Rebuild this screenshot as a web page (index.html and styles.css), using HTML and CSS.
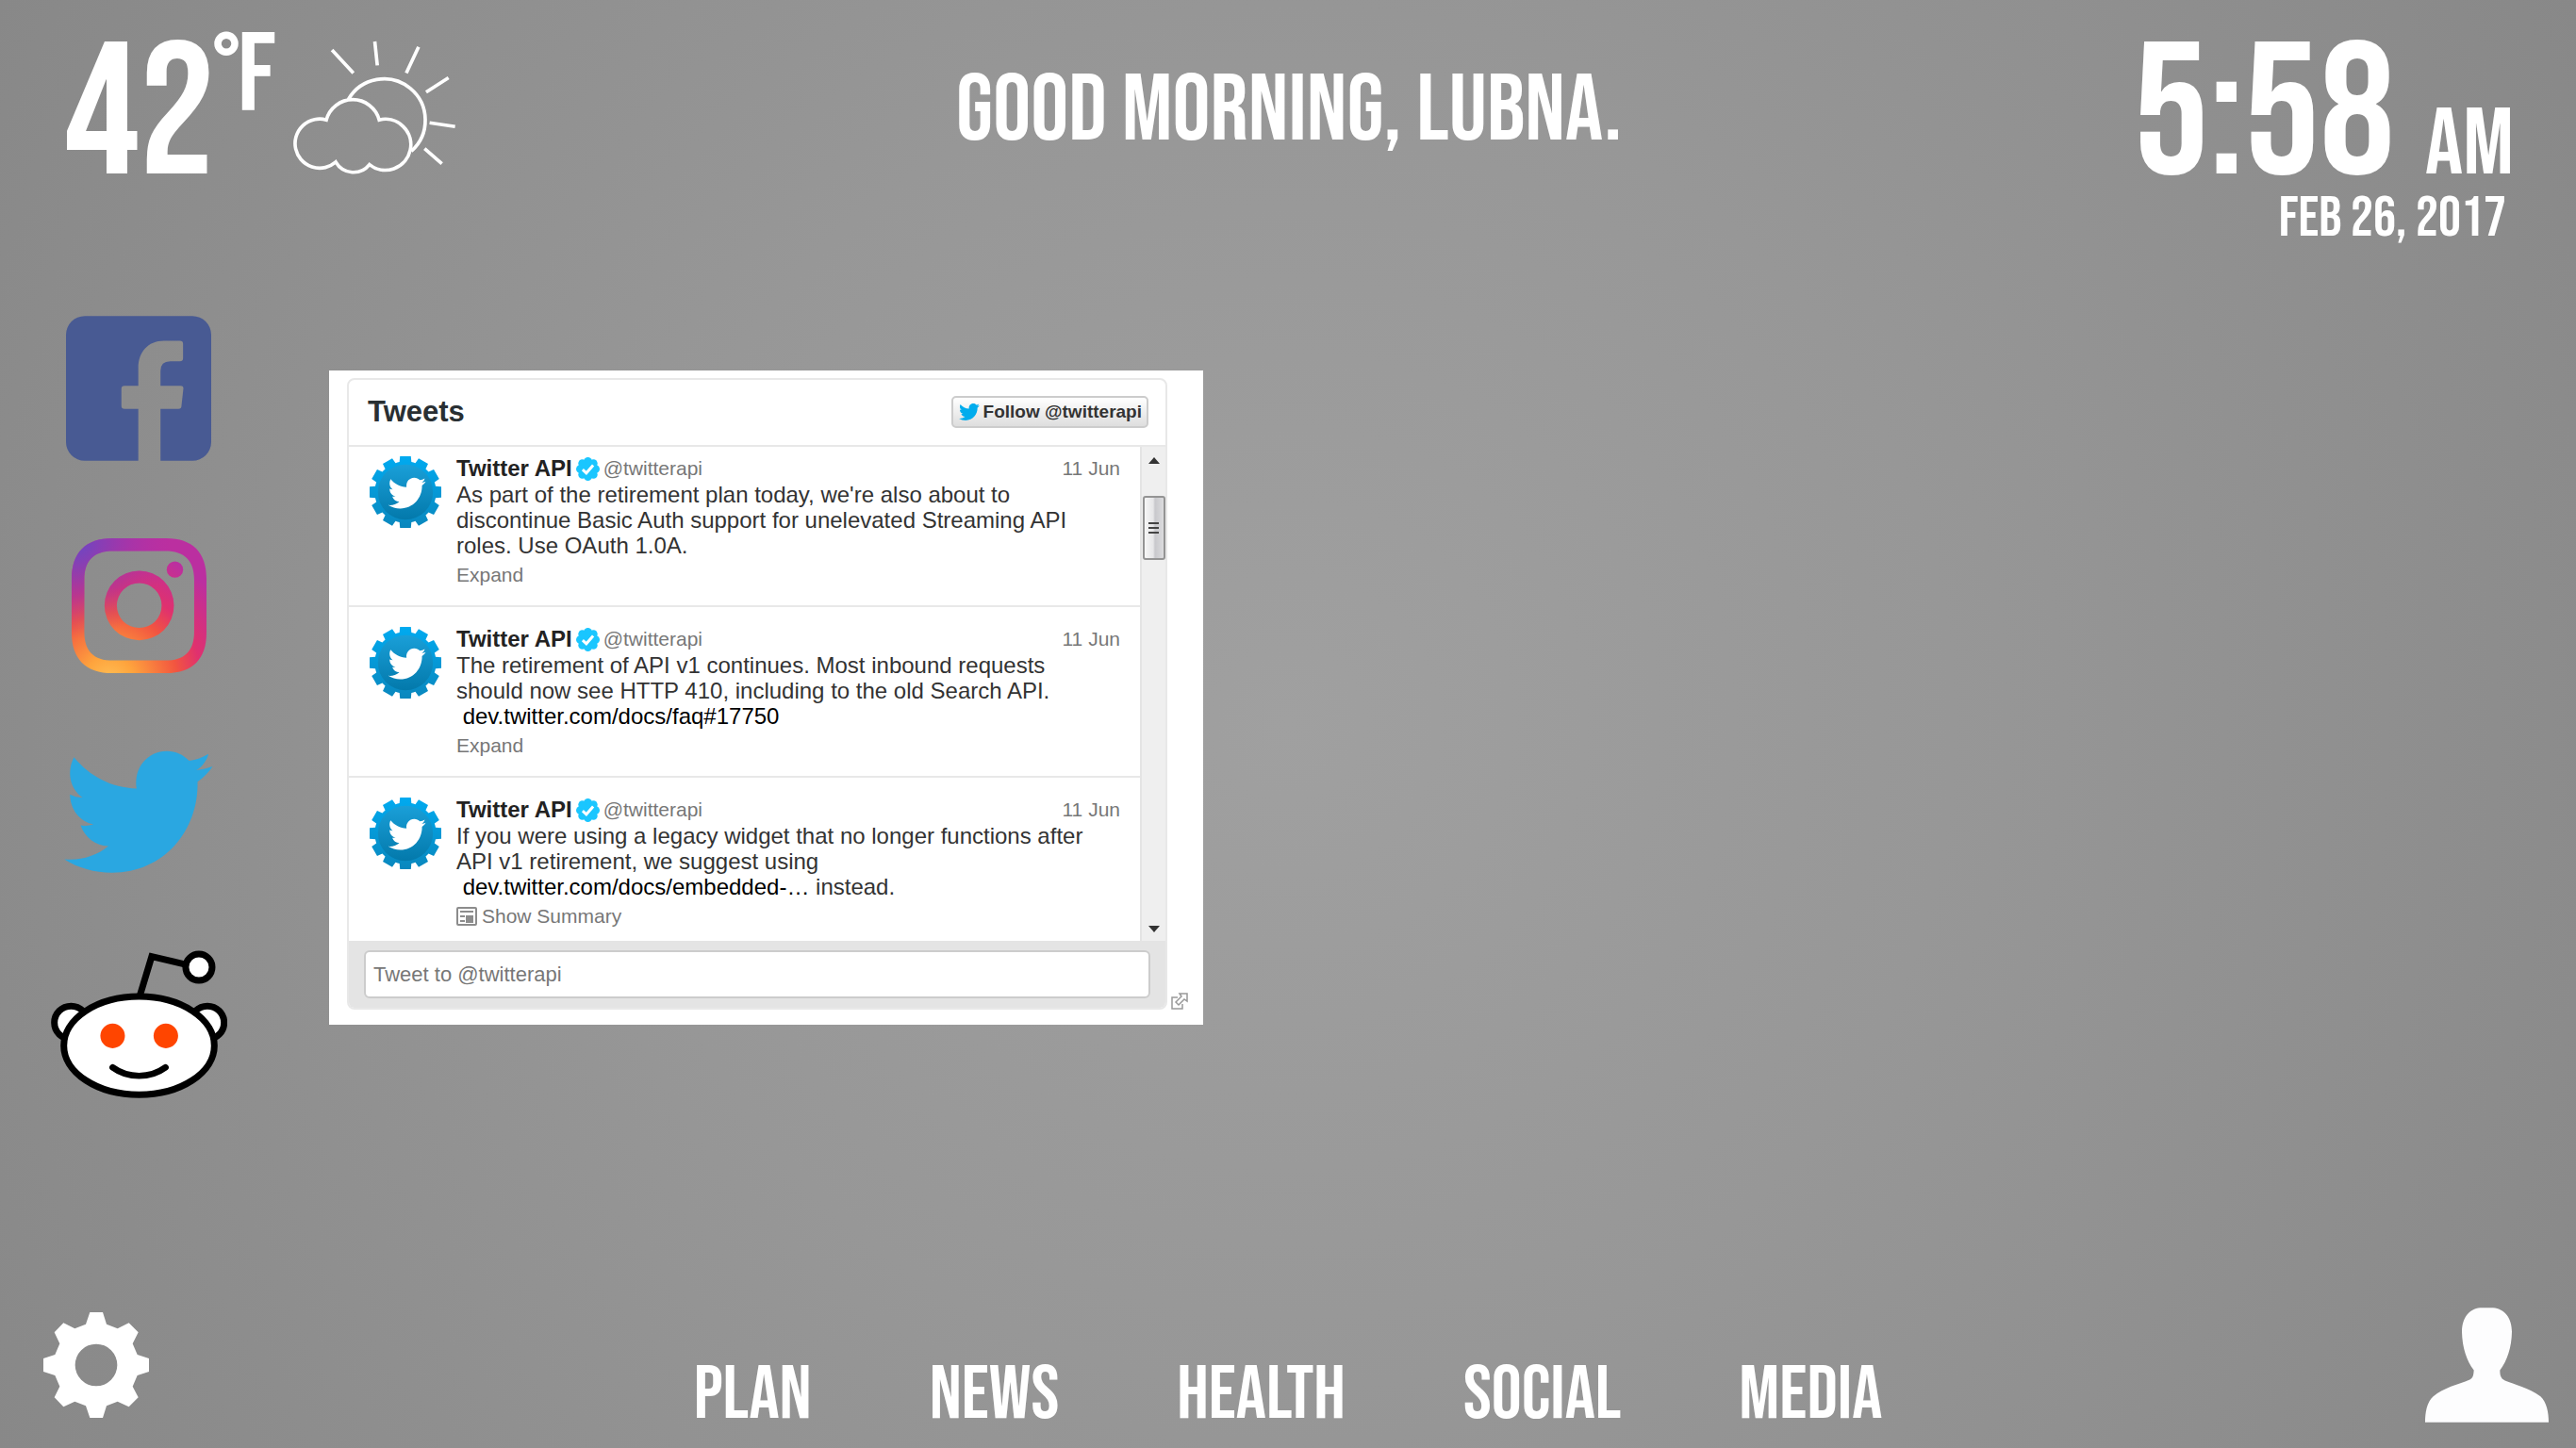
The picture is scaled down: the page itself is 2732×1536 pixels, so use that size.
FILE: index.html
```html
<!DOCTYPE html>
<html lang="en">
<head>
<meta charset="utf-8">
<title>Good Morning, Lubna.</title>
<link rel="stylesheet" href="styles.css">
</head>
<body>
<svg class="defs" aria-hidden="true">
  <defs>
    <symbol id="bird" viewBox="88 76 475 392">
      <path d="M119 98C168 158 238 196 319 198C309 130 355 78 416 78C444 78 468 89 487 109C510 106 530 98 549 87C543 109 530 127 510 139C530 137 546 133 562 127C549 147 534 162 514 176C518 330 408 467 240 467C185 467 132 452 88 424C140 429 190 414 229 382C187 381 154 355 140 316C154 318 168 317 181 313C137 303 107 266 106 217C118 223 132 227 146 227C107 200 94 146 119 98Z"/>
    </symbol>
    <linearGradient id="cogOuter" x1="0" y1="-112" x2="0" y2="112" gradientUnits="userSpaceOnUse">
      <stop offset="0" stop-color="#00aaf0"/><stop offset="1" stop-color="#0a87bd"/>
    </linearGradient>
    <linearGradient id="cogInner" x1="0" y1="-86" x2="0" y2="86" gradientUnits="userSpaceOnUse">
      <stop offset="0" stop-color="#1a9fd8"/><stop offset="1" stop-color="#0379ab"/>
    </linearGradient>
    <clipPath id="cogTeeth">
      <circle r="96"/>
      <path d="M-17-112H17L19-90V90L17 112H-17L-19 90V-90Z"/>
      <path d="M-17-112H17L19-90V90L17 112H-17L-19 90V-90Z" transform="rotate(30)"/>
      <path d="M-17-112H17L19-90V90L17 112H-17L-19 90V-90Z" transform="rotate(60)"/>
      <path d="M-17-112H17L19-90V90L17 112H-17L-19 90V-90Z" transform="rotate(90)"/>
      <path d="M-17-112H17L19-90V90L17 112H-17L-19 90V-90Z" transform="rotate(120)"/>
      <path d="M-17-112H17L19-90V90L17 112H-17L-19 90V-90Z" transform="rotate(150)"/>
    </clipPath>
    <symbol id="cog" viewBox="-112 -112 224 224">
      <rect x="-112" y="-112" width="224" height="224" fill="url(#cogOuter)" clip-path="url(#cogTeeth)"/>
      <circle r="86" fill="url(#cogInner)"/>
      <use href="#bird" x="-54" y="-47" width="118" height="100" fill="#fff"/>
    </symbol>
    <symbol id="verified" viewBox="-38 -38 76 76">
      <g fill="#1ac6ff">
        <circle r="32"/>
        <circle cx="25" cy="0" r="13"/><circle cx="-25" cy="0" r="13"/>
        <circle cx="0" cy="25" r="13"/><circle cx="0" cy="-25" r="13"/>
        <circle cx="18" cy="18" r="13"/><circle cx="-18" cy="18" r="13"/>
        <circle cx="18" cy="-18" r="13"/><circle cx="-18" cy="-18" r="13"/>
      </g>
      <path d="M-17 2L-5 13L17-12" fill="none" stroke="#fff" stroke-width="9"/>
    </symbol>
  </defs>
</svg>

<header class="top">
  <section class="weather" aria-label="Weather">
    <span class="degrees">42</span><span class="ring">°</span><span class="unit">F</span>
    <svg class="sky" viewBox="820 66 518 428" fill="none" stroke="#fff" stroke-width="11" role="img" aria-label="Partly cloudy">
      <path d="M925 321A78 78 0 1 0 955 455A65 65 0 0 0 1062 463A81 81 0 1 0 1093 321A87 87 0 0 0 925 321Z"/>
      <path d="M995 256A131 131 0 1 1 1195 420"/>
      <path d="M943 99L1011 172M1079 72L1087 148M1218 89L1179 172M1313 187L1242 233M1253 330L1334 342M1237 412L1292 460"/>
    </svg>
  </section>
  <h1 class="greeting">Good Morning, Lubna.</h1>
  <section class="clock">
    <div class="time">5:58 <span class="meridiem">AM</span></div>
    <div class="date">Feb 26, 2017</div>
  </section>
</header>

<main class="stage">
  <nav class="networks" aria-label="Social networks">
    <a href="#facebook" class="network" aria-label="Facebook">
      <svg class="facebook" viewBox="84 74 464 463"><path fill="#485a93" d="M144 74H488A60 60 0 0 1 548 134V477A60 60 0 0 1 488 537H386V371H443Q453 371 453 361L459 307Q460 297 450 297H386V250Q386 219 417 219H448Q458 219 458 209V163Q458 153 448 153H397C345 153 315 190 315 240V297H271Q261 297 261 307V361Q261 371 271 371H315V537H144A60 60 0 0 1 84 477V134A60 60 0 0 1 144 74Z"/></svg>
    </a>
    <a href="#instagram" class="network" aria-label="Instagram">
      <svg class="instagram" viewBox="106 784 427 427">
        <defs>
          <radialGradient id="igWarm" gradientUnits="userSpaceOnUse" cx="225" cy="1235" r="430">
            <stop offset="0" stop-color="#ffbf55"/><stop offset=".18" stop-color="#fea43d"/><stop offset=".5" stop-color="#f25540"/><stop offset=".68" stop-color="#e0316e"/><stop offset="1" stop-color="#bb2fa0"/>
          </radialGradient>
          <radialGradient id="igCool" gradientUnits="userSpaceOnUse" cx="120" cy="800" r="300">
            <stop offset="0" stop-color="#6a48c4"/><stop offset=".35" stop-color="#7f40b8" stop-opacity=".7"/><stop offset="1" stop-color="#b030a8" stop-opacity="0"/>
          </radialGradient>
          <g id="igShape">
            <path fill-rule="evenodd" d="M235 784H405C490 784 533 830 533 912V1083C533 1165 490 1211 405 1211H235C150 1211 106 1165 106 1083V912C106 830 150 784 235 784ZM237 824C175 824 146 855 146 915V1080C146 1140 175 1171 237 1171H402C464 1171 494 1140 494 1080V915C494 855 464 824 402 824Z"/>
            <path fill-rule="evenodd" d="M320 887A110 110 0 1 1 320 1107A110 110 0 1 1 320 887ZM320 926A71 71 0 1 0 320 1068A71 71 0 1 0 320 926Z"/>
            <circle cx="433" cy="883" r="26"/>
          </g>
        </defs>
        <use href="#igShape" fill="url(#igWarm)"/>
        <use href="#igShape" fill="url(#igCool)"/>
      </svg>
    </a>
    <a href="#twitter" class="network" aria-label="Twitter">
      <svg class="twitter" fill="#2aa7e1"><use href="#bird"/></svg>
    </a>
    <a href="#reddit" class="network" aria-label="Reddit">
      <svg class="reddit" viewBox="42 712 560 470" fill="#fff" stroke="#000" stroke-width="21">
        <circle cx="106" cy="942" r="53"/>
        <circle cx="539" cy="942" r="53"/>
        <path fill="none" d="M324 858L362 732L470 757"/>
        <circle cx="512" cy="766" r="42"/>
        <ellipse cx="322" cy="1015" rx="239" ry="156"/>
        <g fill="#ff4500" stroke="none"><circle cx="238" cy="984" r="39"/><circle cx="407" cy="984" r="39"/></g>
        <path fill="none" stroke-linecap="round" stroke-width="20" d="M238 1084Q275 1111 322 1111T406 1084"/>
      </svg>
    </a>
  </nav>

  <section class="widget" aria-label="Tweets">
    <div class="card">
      <header class="card-head">
        <h2 class="card-title">Tweets</h2>
        <button class="follow" type="button"><svg class="follow-bird" fill="#00aced"><use href="#bird"/></svg>Follow @twitterapi</button>
      </header>
      <div class="feed">
        <div class="tweets">
          <article class="tweet">
            <svg class="avatar"><use href="#cog"/></svg>
            <div class="tweet-body">
              <div class="byline"><b class="name">Twitter API</b><svg class="badge"><use href="#verified"/></svg><span class="handle">@twitterapi</span><time class="when">11 Jun</time></div>
              <p class="text">As part of the retirement plan today, we're also about to<br>discontinue Basic Auth support for unelevated Streaming API<br>roles. Use OAuth 1.0A.</p>
              <a class="more" href="#expand">Expand</a>
            </div>
          </article>
          <article class="tweet">
            <svg class="avatar"><use href="#cog"/></svg>
            <div class="tweet-body">
              <div class="byline"><b class="name">Twitter API</b><svg class="badge"><use href="#verified"/></svg><span class="handle">@twitterapi</span><time class="when">11 Jun</time></div>
              <p class="text">The retirement of API v1 continues. Most inbound requests<br>should now see HTTP 410, including to the old Search API.<br>&nbsp;<a class="link" href="#faq">dev.twitter.com/docs/faq#17750</a></p>
              <a class="more" href="#expand">Expand</a>
            </div>
          </article>
          <article class="tweet">
            <svg class="avatar"><use href="#cog"/></svg>
            <div class="tweet-body">
              <div class="byline"><b class="name">Twitter API</b><svg class="badge"><use href="#verified"/></svg><span class="handle">@twitterapi</span><time class="when">11 Jun</time></div>
              <p class="text">If you were using a legacy widget that no longer functions after<br>API v1 retirement, we suggest using<br>&nbsp;<a class="link" href="#embedded">dev.twitter.com/docs/embedded-…</a> instead.</p>
              <a class="more" href="#summary"><svg class="summary" viewBox="0 0 22 20"><rect x="1" y="1" width="20" height="18" rx="1" fill="none" stroke="#8c8c8c" stroke-width="2"/><path fill="#8c8c8c" d="M4 4h14v2H4zM4 9h5v2H4zM4 14h5v2H4zM10 9h8v8h-8z"/></svg>Show Summary</a>
            </div>
          </article>
        </div>
        <div class="scrollbar" aria-hidden="true">
          <svg class="arrow" viewBox="0 0 12 7"><path d="M6 0L12 7H0Z" fill="#333"/></svg>
          <span class="thumb"><i></i><i></i><i></i></span>
          <svg class="arrow arrow-down" viewBox="0 0 12 7"><path d="M0 0H12L6 7Z" fill="#333"/></svg>
        </div>
      </div>
      <form class="compose">
        <input class="compose-box" type="text" aria-label="Tweet to @twitterapi" placeholder="Tweet to @twitterapi">
      </form>
    </div>
    <svg class="popout" viewBox="0 0 18 18" fill="none" stroke="#999" stroke-width="1.5"><path d="M7 5H1V17H12V12"/><path d="M9 1H17V9L14 7L8 13L5 10L11 4Z"/></svg>
  </section>
</main>

<footer class="bottom">
  <button class="icon-button" type="button" aria-label="Settings">
    <svg class="gear" viewBox="48 66 336 336"><path fill="#fff" fill-rule="evenodd" d="M196 66H237L249 104L284 118L320 100L350 130L332 166L347 201L384 213V255L347 267L332 302L350 337L320 367L284 350L249 364L237 402H196L183 364L148 350L112 367L83 337L100 302L85 267L48 255V213L85 201L100 166L83 130L112 100L148 118L183 104ZM216 167A67 67 0 1 0 216 301A67 67 0 1 0 216 167Z"/></svg>
  </button>
  <nav class="sections" aria-label="Sections">
    <a href="#plan">Plan</a>
    <a href="#news">News</a>
    <a href="#health">Health</a>
    <a href="#social">Social</a>
    <a href="#media">Media</a>
  </nav>
  <button class="icon-button" type="button" aria-label="Profile">
    <svg class="person" viewBox="96 51 393 365"><path fill="#fdfdfe" d="M271 51H312C350 54 372 85 372 128C371 178 357 220 334 250C334 268 337 276 350 283C380 296 425 305 463 333C483 351 489 385 489 416H96C96 385 101 351 122 333C155 305 200 296 238 280C248 274 250 268 251 250C228 220 214 178 213 128C213 85 235 54 271 51Z"/></svg>
  </button>
</footer>
</body>
</html>
```
FILE: styles.css
```css
* {
  box-sizing: border-box;
}

body {
  margin: 0;
  min-height: 100vh;
  display: flex;
  flex-direction: column;
  background: radial-gradient(circle farthest-corner at center, #a0a0a0 0%, #979797 45%, #888 100%);
  color: #fff;
  font-family: "Bebas Neue", Oswald, "Roboto Condensed", sans-serif;
  font-weight: 400;
}

a {
  color: inherit;
  text-decoration: none;
}

svg {
  display: block;
  flex: none;
}

.defs {
  position: absolute;
  width: 0;
  height: 0;
}

/* Top bar */

.top {
  display: grid;
  grid-template-columns: 1fr auto 1fr;
  align-items: start;
  padding: 35px 66px 0 68px;
}

.weather {
  display: flex;
  align-items: flex-start;
}

.degrees {
  margin-top: 9px;
  font-size: 200px;
  line-height: 160px;
}

.ring {
  margin: 0 -8px;
  font-size: 100px;
  line-height: 80px;
}

.unit {
  font-size: 118px;
  line-height: 94px;
}

.sky {
  width: 173px;
  height: 143px;
  margin: 7px 0 0 18px;
}

.greeting {
  margin: 43px 0 0;
  font-size: 100px;
  font-weight: 400;
  line-height: 80px;
}

.clock {
  margin-top: 9px;
  text-align: right;
}

.time {
  font-size: 200px;
  line-height: 160px;
}

.meridiem {
  font-size: 100px;
  line-height: 80px;
}

.date {
  padding-right: 8px;
  font-size: 60px;
  line-height: 56px;
}

/* Middle */

.stage {
  flex: 1;
  display: flex;
  align-items: flex-start;
  padding: 75px 54px 0;
}

.networks {
  display: flex;
  flex-direction: column;
  align-items: center;
  gap: 82px;
  width: 186px;
}

.facebook {
  width: 154px;
  height: 154px;
}

.instagram {
  width: 143px;
  height: 143px;
}

.twitter {
  width: 158px;
  height: 130px;
}

.reddit {
  width: 187px;
  height: 157px;
}

/* Tweets widget */

.widget {
  display: flex;
  align-items: flex-end;
  gap: 4px;
  width: 927px;
  margin: 58px 0 0 109px;
  padding: 8px 16px 16px 19px;
  background: #fff;
  color: #333;
  font-family: "Liberation Sans", Arial, sans-serif;
}

.card {
  width: 870px;
  border: 2px solid #e8e8e8;
  border-radius: 8px;
  overflow: hidden;
}

.card-head {
  display: flex;
  align-items: center;
  justify-content: space-between;
  height: 71px;
  padding: 0 18px 2px 20px;
  border-bottom: 2px solid #e8e8e8;
}

.card-title {
  margin: 0;
  font-size: 31px;
  line-height: 36px;
  color: #292f33;
}

.follow {
  display: flex;
  align-items: center;
  gap: 4px;
  height: 34px;
  padding: 0 5px 0 6px;
  border: 2px solid #ccc;
  border-radius: 5px;
  background: linear-gradient(#fff, #dedede);
  color: #333;
  font: bold 19px/24px "Liberation Sans", Arial, sans-serif;
}

.follow-bird {
  width: 22px;
  height: 18px;
}

.feed {
  display: flex;
  height: 524px;
}

.tweets {
  flex: 1;
  overflow: hidden;
}

.tweet {
  display: flex;
  gap: 16px;
  height: 181px;
  padding: 20px 21px 0 22px;
  border-bottom: 2px solid #e8e8e8;
}

.tweet:first-child {
  height: 170px;
  padding-top: 9px;
}

.avatar {
  width: 76px;
  height: 76px;
  margin-top: 1px;
}

.tweet-body {
  flex: 1;
}

.byline {
  display: flex;
  align-items: center;
  height: 28px;
  font-size: 21px;
  line-height: 28px;
  color: #777;
}

.name {
  font-size: 24px;
  color: #222;
}

.badge {
  width: 25px;
  height: 25px;
  margin: 0 4px;
}

.when {
  margin-left: auto;
}

.text {
  margin: 0;
  font-size: 24px;
  line-height: 27px;
  white-space: nowrap;
}

.link {
  color: #000;
}

.more {
  display: flex;
  align-items: center;
  gap: 5px;
  margin-top: 4px;
  font-size: 21px;
  line-height: 28px;
  color: #777;
}

.summary {
  width: 22px;
  height: 20px;
}

.scrollbar {
  display: flex;
  flex-direction: column;
  align-items: center;
  width: 27px;
  padding: 11px 0 9px;
  border-left: 2px solid #e4e4e4;
  background: #efefef;
}

.arrow {
  width: 12px;
  height: 7px;
}

.thumb {
  display: flex;
  flex-direction: column;
  align-items: center;
  justify-content: center;
  gap: 3px;
  width: 24px;
  height: 68px;
  margin-top: 34px;
  border: 2px solid #949494;
  border-radius: 3px;
  background: linear-gradient(90deg, #f6f6f6 0%, #e6e6e8 45%, #c8c8cc 55%, #dcdcde 100%);
}

.thumb i {
  width: 11px;
  height: 2px;
  background: #444;
}

.arrow-down {
  margin-top: auto;
}

.compose {
  padding: 10px 16px 10px;
  background: #e4e4e4;
}

.compose-box {
  display: block;
  width: 100%;
  height: 51px;
  padding: 0 8px;
  border: 2px solid #ccc;
  border-radius: 6px;
  background: #fff;
  color: #333;
  font: 22px/28px "Liberation Sans", Arial, sans-serif;
}

.compose-box::placeholder {
  color: #777;
  opacity: 1;
}

.popout {
  width: 18px;
  height: 18px;
}

/* Bottom bar */

.bottom {
  display: grid;
  grid-template-columns: 1fr auto 1fr;
  align-items: end;
  padding: 0 29px 16px;
}

.icon-button {
  justify-self: start;
  padding: 0;
  border: 0;
  background: none;
}

.icon-button:last-child {
  justify-self: end;
}

.gear {
  width: 112px;
  height: 112px;
  margin: 0 0 16px 17px;
}

.person {
  width: 131px;
  height: 122px;
  margin-bottom: 11px;
}

.sections {
  display: flex;
  gap: 125px;
  font-size: 80px;
  line-height: 80px;
}
```
